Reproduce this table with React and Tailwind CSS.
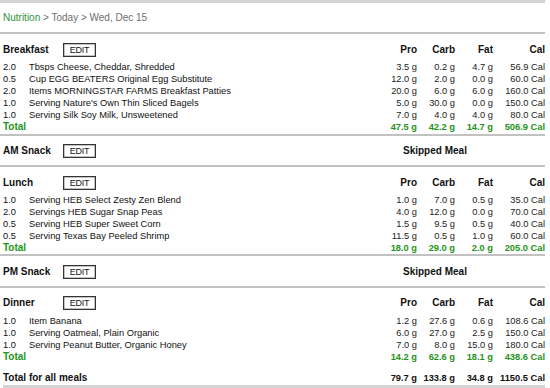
import React from "react";

const meals = [
  {
    name: "Breakfast",
    pt: "pt-[8px]",
    pb: "pb-[1px]",
    mt: "mt-[3px]",
    items: [
      ["2.0", "Tbsps Cheese, Cheddar, Shredded", "3.5 g", "0.2 g", "4.7 g", "56.9 Cal"],
      ["0.5", "Cup EGG BEATERS Original Egg Substitute", "12.0 g", "2.0 g", "0.0 g", "60.0 Cal"],
      ["2.0", "Items MORNINGSTAR FARMS Breakfast Patties", "20.0 g", "6.0 g", "6.0 g", "160.0 Cal"],
      ["1.0", "Serving Nature's Own Thin Sliced Bagels", "5.0 g", "30.0 g", "0.0 g", "150.0 Cal"],
      ["1.0", "Serving Silk Soy Milk, Unsweetened", "7.0 g", "4.0 g", "4.0 g", "80.0 Cal"],
    ],
    total: ["47.5 g", "42.2 g", "14.7 g", "506.9 Cal"],
  },
  { name: "AM Snack", pt: "pt-[7px]", pb: "pb-[6px]", skipped: true },
  {
    name: "Lunch",
    pt: "pt-[8px]",
    pb: "pb-0",
    mt: "mt-[3px]",
    items: [
      ["1.0", "Serving HEB Select Zesty Zen Blend", "1.0 g", "7.0 g", "0.5 g", "35.0 Cal"],
      ["2.0", "Servings HEB Sugar Snap Peas", "4.0 g", "12.0 g", "0.0 g", "70.0 Cal"],
      ["0.5", "Serving HEB Super Sweet Corn", "1.5 g", "9.5 g", "0.5 g", "40.0 Cal"],
      ["0.5", "Serving Texas Bay Peeled Shrimp", "11.5 g", "0.5 g", "1.0 g", "60.0 Cal"],
    ],
    total: ["18.0 g", "29.0 g", "2.0 g", "205.0 Cal"],
  },
  { name: "PM Snack", pt: "pt-[8px]", pb: "pb-[6px]", skipped: true },
  {
    name: "Dinner",
    pt: "pt-[7px]",
    pb: "pb-0",
    mt: "mt-[4px]",
    items: [
      ["1.0", "Item Banana", "1.2 g", "27.6 g", "0.6 g", "108.6 Cal"],
      ["1.0", "Serving Oatmeal, Plain Organic", "6.0 g", "27.0 g", "2.5 g", "150.0 Cal"],
      ["1.0", "Serving Peanut Butter, Organic Honey", "7.0 g", "8.0 g", "15.0 g", "180.0 Cal"],
    ],
    total: ["14.2 g", "62.6 g", "18.1 g", "438.6 Cal"],
  },
];

const GRID = "grid grid-cols-[26px_350px_38px_38px_38px_52px]";

function Divider() {
  return <div className="h-[2px] w-[545px] bg-[#c2c2c2]" />;
}

function MealHeader({ meal }) {
  return (
    <div className={`${GRID} h-[16px] items-center`}>
      <div className="col-span-2 flex items-center">
        <span className="w-[60px] text-[10px] font-bold text-[#111] leading-[12px]">{meal.name}</span>
        <span className="flex h-[14px] w-[33px] items-center justify-center border border-[#333] bg-white text-[9px] leading-[10px] tracking-[-0.3px] text-[#111] shadow-[inset_0_0_0_0.5px_#888]">
          EDIT
        </span>
      </div>
      {meal.skipped ? (
        <div className="col-span-4 pl-[24px] text-[10px] font-bold leading-[12px] text-[#111]">Skipped Meal</div>
      ) : (
        ["Pro", "Carb", "Fat", "Cal"].map((h) => (
          <div key={h} className="text-right text-[10px] font-bold leading-[12px] text-[#111]">
            {h}
          </div>
        ))
      )}
    </div>
  );
}

function ItemRow({ row }) {
  return (
    <div className={`${GRID} h-[12px] text-[9.3px] leading-[12px] text-[#111]`}>
      <div>{row[0]}</div>
      <div className="whitespace-nowrap">{row[1]}</div>
      <div className="text-right whitespace-nowrap text-[#222]">{row[2]}</div>
      <div className="text-right whitespace-nowrap text-[#222]">{row[3]}</div>
      <div className="text-right whitespace-nowrap text-[#222]">{row[4]}</div>
      <div className="text-right whitespace-nowrap text-[#222]">{row[5]}</div>
    </div>
  );
}

function TotalRow({ vals }) {
  return (
    <div className={`${GRID} h-[12px] text-[9.3px] font-bold leading-[12px] text-[#1f9420]`}>
      <div className="col-span-2 text-[10px]">Total</div>
      {vals.map((v, i) => (
        <div key={i} className="text-right whitespace-nowrap">
          {v}
        </div>
      ))}
    </div>
  );
}

export default function App() {
  return (
    <div className="w-[550px] h-[388px] overflow-hidden bg-white font-['Liberation_Sans',Arial,sans-serif]">
      <div className="h-[3px] w-[545px] bg-[#d4d4d4]" />
      <div className="h-[29px] pl-[3px] pt-[9px] text-[10px] leading-[12px]">
        <span className="text-[#2f9440]">Nutrition</span>
        <span className="text-[#6e6e6e]"> &gt; Today &gt; Wed, Dec 15</span>
      </div>
      {meals.map((meal) => (
        <div key={meal.name}>
          <Divider />
          <div className={`pl-[3px] ${meal.pt} ${meal.pb}`}>
            <MealHeader meal={meal} />
            {meal.items && (
              <div className={meal.mt}>
                {meal.items.map((r, i) => (
                  <ItemRow key={i} row={r} />
                ))}
                <TotalRow vals={meal.total} />
              </div>
            )}
          </div>
        </div>
      ))}
      <div className={`${GRID} mt-[9px] h-[12px] pl-[3px] text-[9.3px] font-bold leading-[12px] text-[#111]`}>
        <div className="col-span-2 text-[10px]">Total for all meals</div>
        <div className="text-right whitespace-nowrap">79.7 g</div>
        <div className="text-right whitespace-nowrap">133.8 g</div>
        <div className="text-right whitespace-nowrap">34.8 g</div>
        <div className="text-right whitespace-nowrap">1150.5 Cal</div>
      </div>
      <div className="ml-[3px] mt-[1px] h-[3px] w-[542px] bg-[#d4d4d4]" />
    </div>
  );
}
